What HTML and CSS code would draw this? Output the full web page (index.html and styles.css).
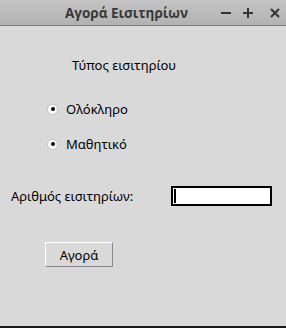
FILE: index.html
```html
<!DOCTYPE html>
<html lang="el">

<head>
    <meta charset="UTF-8">
    <meta name="viewport" content="width=device-width, initial-scale=1.0">
    <title>Αγορά Εισιτηρίων</title>
    <link rel="stylesheet" href="styles.css">
</head>

<body>
    <div class="window">
        <div class="titlebar">
            <span class="title">Αγορά Εισιτηρίων</span>
            <div class="controls">
                <svg class="min" width="10" height="10" viewBox="0 0 10 10"><path d="M0 5h10" stroke="#333" stroke-width="2"/></svg>
                <svg class="max" width="10" height="10" viewBox="0 0 10 10"><path d="M0 5h10M5 0v10" stroke="#333" stroke-width="2"/></svg>
                <svg class="close" width="10" height="10" viewBox="0 0 10 10"><path d="M1 1l8 8M9 1l-8 8" stroke="#333" stroke-width="2"/></svg>
            </div>
        </div>

        <div class="content">
            <div class="heading">Τύπος εισιτηρίου</div>

            <label class="radio">
                <span class="dot"></span>
                <span>Ολόκληρο</span>
            </label>
            <label class="radio second">
                <span class="dot"></span>
                <span>Μαθητικό</span>
            </label>

            <div class="row">
                <span>Αριθμός εισιτηρίων:</span>
                <div class="entry"><span class="cursor"></span></div>
            </div>

            <button class="buy">Αγορά</button>
        </div>
        <div class="bottom"></div>
    </div>
</body>

</html>
```

FILE: styles.css
```css
body {
    margin: 0;
    padding: 0;
    width: 286px;
    height: 328px;
    overflow: hidden;
    font-family: "Noto Sans", sans-serif;
    font-size: 13px;
    color: #000;
}

.window {
    display: flex;
    flex-direction: column;
    height: 328px;
    background: #d9d9d9;
}

.titlebar {
    height: 25px;
    border-bottom: 1px solid #7a7a7a;
    background: linear-gradient(#c4c4c4, #b2b2b2);
    display: flex;
    align-items: center;
    position: relative;
}

.title {
    position: absolute;
    left: 65px;
    font-family: "Open Sans", sans-serif;
    font-weight: bold;
    font-size: 13.5px;
    color: #383838;
}

.controls {
    margin-left: auto;
    display: flex;
    padding-right: 6px;
    position: relative;
}

.controls .max {
    margin-left: 12px;
}

.controls .close {
    margin-left: 17px;
}

.content {
    flex: 1;
    padding-left: 11px;
}

.heading {
    margin-top: 30px;
    margin-left: 61px;
}

.radio {
    display: flex;
    align-items: center;
    gap: 9px;
    margin-left: 37px;
    margin-top: 26px;
}

.radio.second {
    margin-top: 17px;
}

.dot {
    width: 9px;
    height: 9px;
    border-radius: 50%;
    background: #fff;
    box-shadow: 0 0 0 1px #c8c8c8;
    display: flex;
    align-items: center;
    justify-content: center;
}

.dot::after {
    content: "";
    width: 4px;
    height: 4px;
    border-radius: 50%;
    background: #000;
}

.row {
    display: flex;
    align-items: center;
    margin-top: 33px;
}

.entry {
    margin-left: 38px;
    width: 96px;
    height: 16px;
    border: 2px solid #000;
    background: #fff;
    display: flex;
    align-items: center;
    padding-left: 1px;
}

.cursor {
    width: 2px;
    height: 14px;
    background: #000;
}

.buy {
    margin-top: 36px;
    margin-left: 34px;
    width: 68px;
    height: 25px;
    font-family: "Noto Sans", sans-serif;
    font-size: 13px;
    color: #000;
    background: #d9d9d9;
    border: 1px solid;
    border-color: #fff #888 #888 #fff;
    padding: 0;
}

.bottom {
    height: 2px;
    background: #1a1a1a;
}
```
